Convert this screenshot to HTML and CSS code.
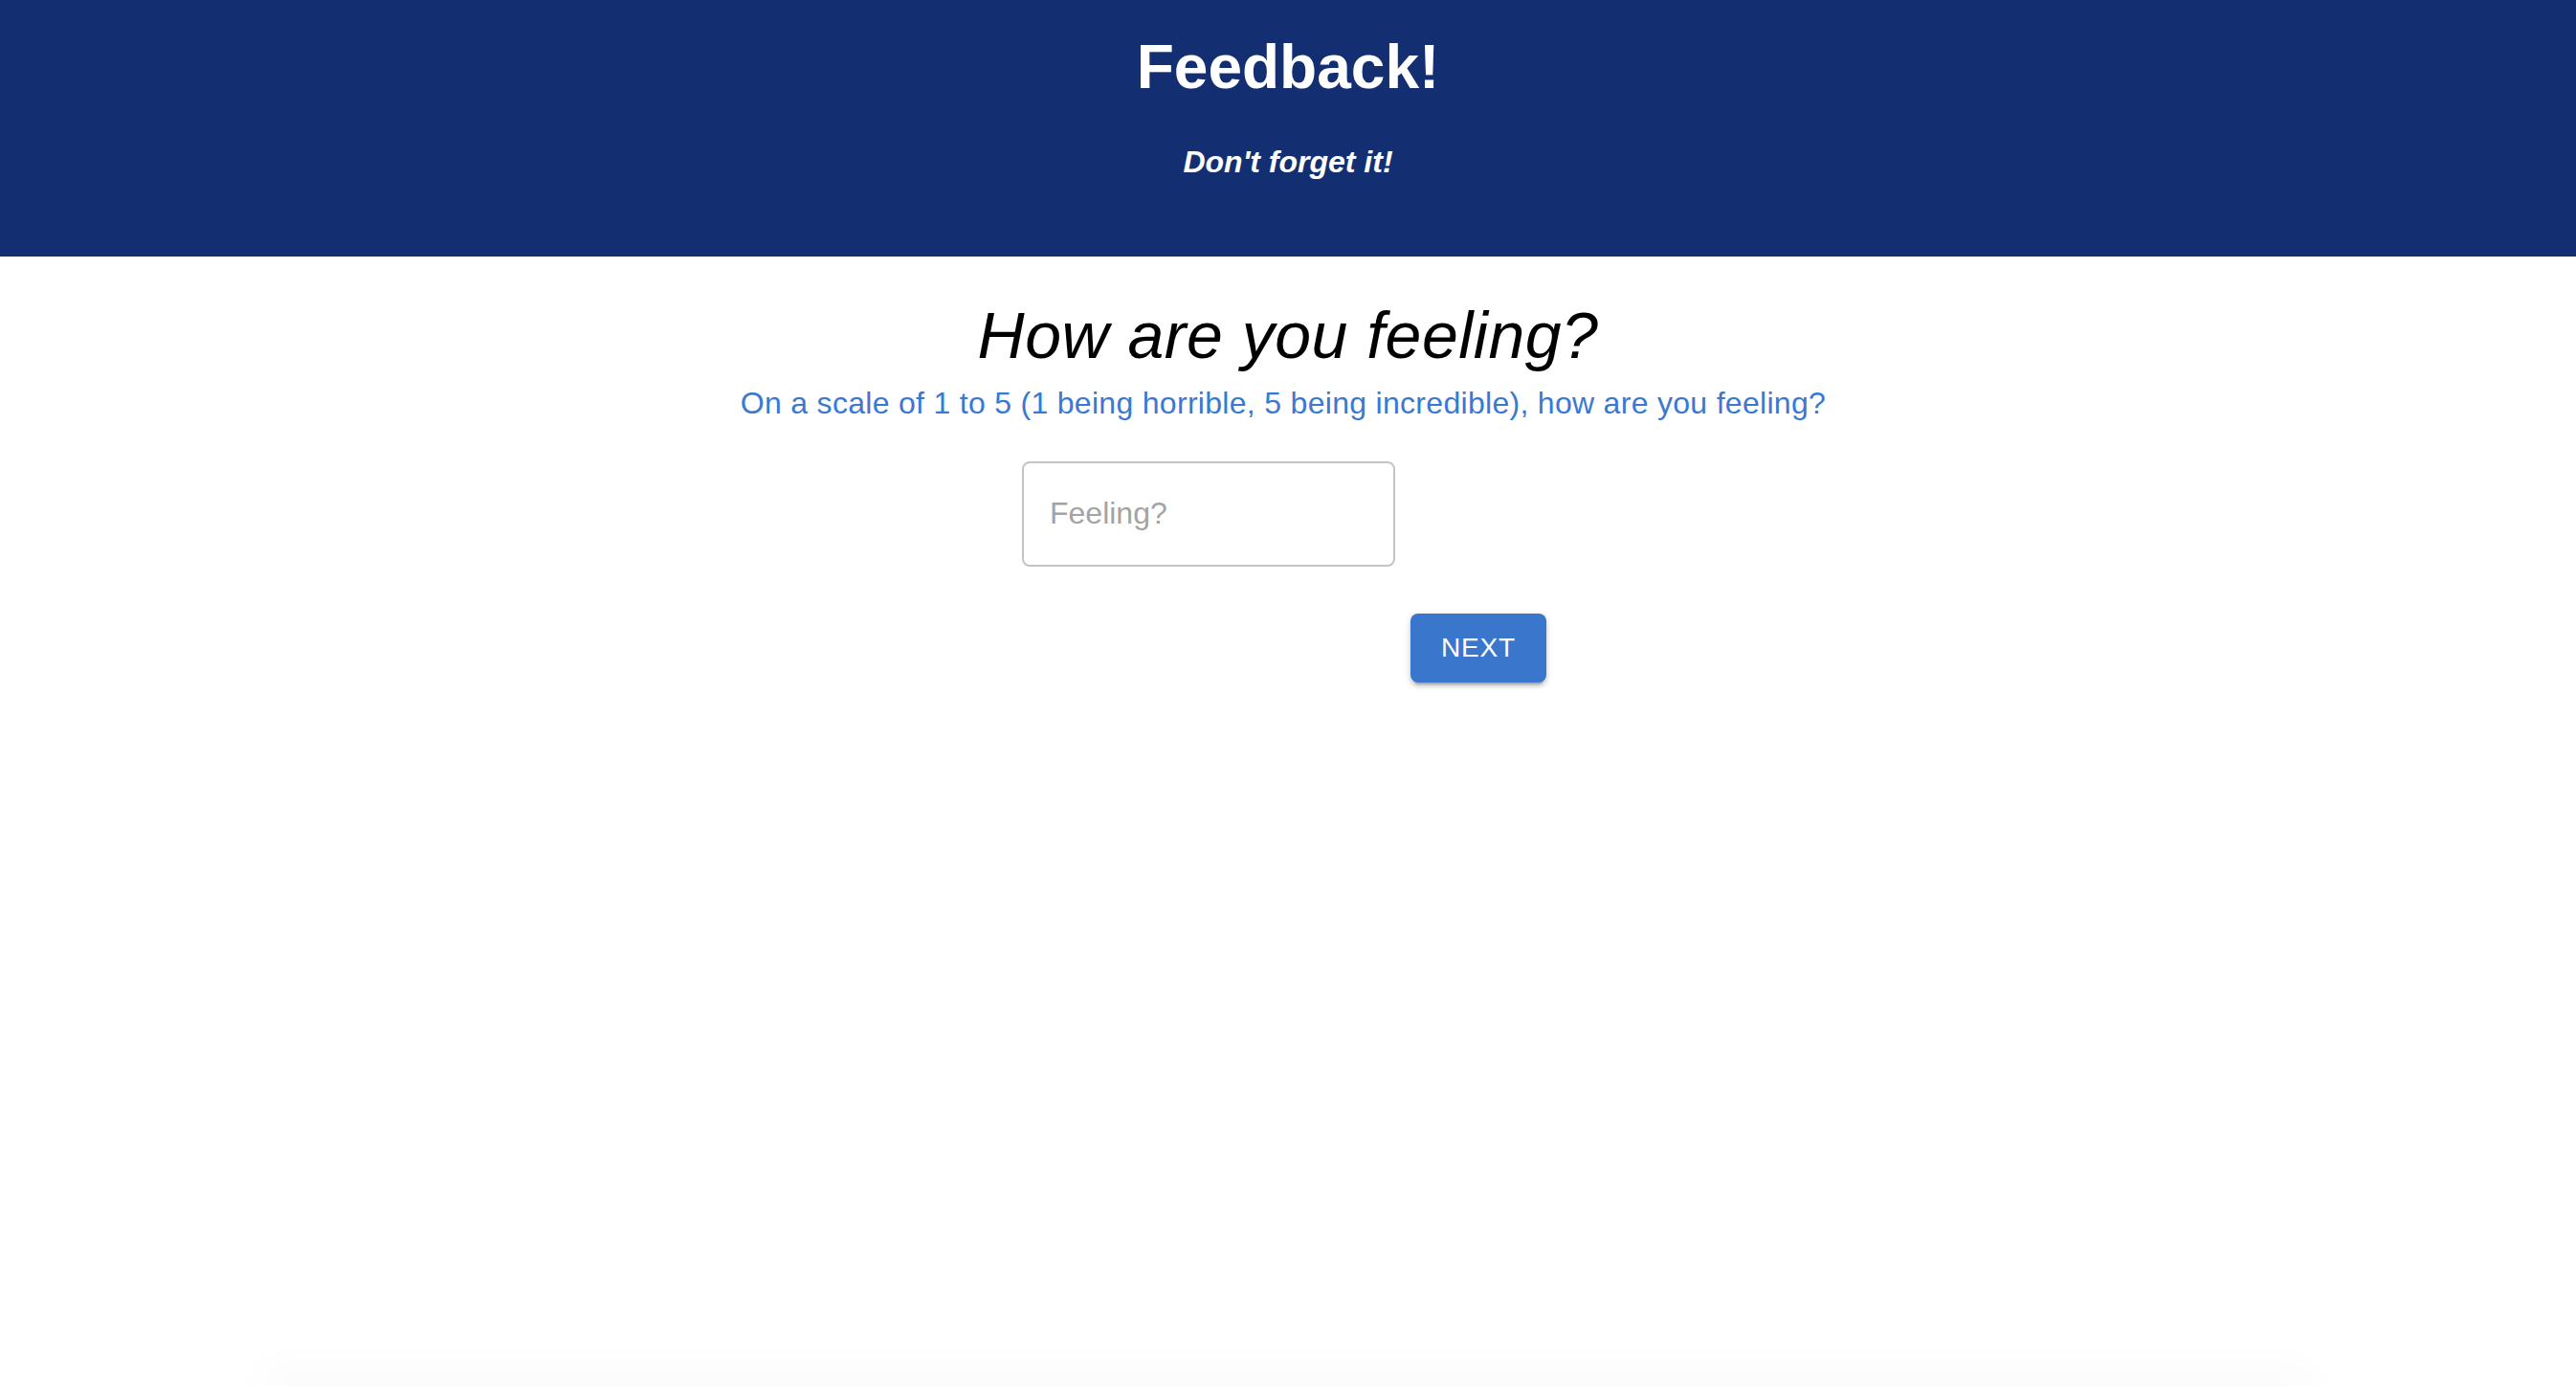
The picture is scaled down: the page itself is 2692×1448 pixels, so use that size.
FILE: index.html
```html
<!DOCTYPE html>
<html lang="en">
<head>
<meta charset="utf-8">
<title>Feedback!</title>
<link rel="stylesheet" href="styles.css">
</head>
<body>
<div class="page">
  <header class="banner">
    <h1 class="banner-title">Feedback!</h1>
    <p class="banner-sub">Don't forget it!</p>
  </header>
  <main class="content">
    <h2 class="question">How are you feeling?</h2>
    <p class="question-hint">On a scale of 1 to 5 (1 being horrible, 5 being incredible), how are you feeling?</p>
    <form class="answer-form">
      <input class="answer-input" type="text" placeholder="Feeling?">
      <button class="next-btn" type="button">Next</button>
    </form>
  </main>
  <div class="bottom-card"></div>
</div>
</body>
</html>
```

FILE: styles.css
```css
html, body {
  margin: 0;
  padding: 0;
  background: #ffffff;
}

body {
  font-family: "Liberation Sans", Arial, Helvetica, sans-serif;
  overflow: hidden;
}

.page {
  min-height: 1448px;
  display: flex;
  flex-direction: column;
}

.banner {
  background: #132f72;
  color: #ffffff;
  text-align: center;
  padding: 33px 0 0;
  height: 268px;
  box-sizing: border-box;
}

.banner-title {
  margin: 0;
  font-size: 64px;
  font-weight: 700;
  line-height: normal;
}

.banner-sub {
  margin: 44px 0 0;
  font-size: 32px;
  font-weight: 700;
  font-style: italic;
  line-height: normal;
}

.content {
  display: flex;
  flex-direction: column;
  align-items: center;
  padding-top: 41px;
}

.question {
  margin: 0;
  font-size: 68px;
  font-weight: 400;
  font-style: italic;
  line-height: 1.235;
  color: #000000;
  letter-spacing: 0.5px;
}

.question-hint {
  margin: 0;
  padding-right: 10px;
  font-size: 32px;
  line-height: 1.75;
  color: #3a78d2;
  letter-spacing: 0.3px;
}

.answer-form {
  width: 556px;
  margin-top: 33px;
  display: flex;
  flex-direction: column;
  align-items: flex-start;
}

.answer-input {
  width: 390px;
  height: 110px;
  box-sizing: border-box;
  border: 2px solid #c4c4c4;
  border-radius: 8px;
  padding: 0 27px;
  font-family: "Liberation Sans", Arial, Helvetica, sans-serif;
  font-size: 32px;
  color: #222;
  outline: none;
  background: #fff;
}

.answer-input::placeholder {
  color: #a3a3a3;
}

.next-btn {
  align-self: flex-end;
  margin: 49px 8px 0 0;
  width: 142px;
  height: 72px;
  border: none;
  border-radius: 8px;
  background: #3a76cc;
  color: #ffffff;
  font-family: "Liberation Sans", Arial, Helvetica, sans-serif;
  font-size: 28px;
  font-weight: 500;
  letter-spacing: 0.8px;
  text-transform: uppercase;
  box-shadow: 0 6px 2px -4px rgba(0,0,0,0.2), 0 4px 4px 0 rgba(0,0,0,0.14), 0 2px 10px 0 rgba(0,0,0,0.12);
  cursor: pointer;
}

.bottom-card {
  margin: auto auto 0;
  width: 2130px;
  height: 0;
  box-shadow: 0 0 50px 8px rgba(0,0,0,0.055);
}
```
